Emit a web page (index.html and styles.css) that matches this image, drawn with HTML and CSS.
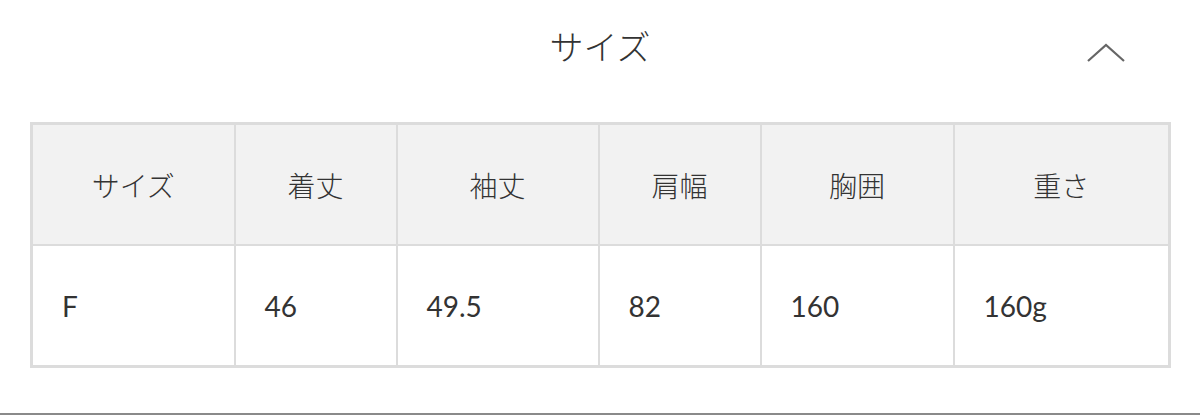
FILE: index.html
```html
<!DOCTYPE html>
<html lang="ja">
<head>
<meta charset="utf-8">
<link rel="stylesheet" href="styles.css">
</head>
<body>
<section class="size">
  <div class="size-head">
    <span class="spacer"></span>
    <h2 class="size-title">サイズ</h2>
    <button class="toggle" aria-label="閉じる">
      <svg width="40" height="22" viewBox="0 0 40 22"><path d="M2 19 L20 3 L38 19" fill="none" stroke="#666" stroke-width="2.2"/></svg>
    </button>
  </div>
  <div class="table-wrap">
    <table class="size-table">
      <colgroup>
        <col class="c1"><col class="c2"><col class="c3"><col class="c4"><col class="c5"><col class="c6">
      </colgroup>
      <thead>
        <tr><th>サイズ</th><th>着丈</th><th>袖丈</th><th>肩幅</th><th>胸囲</th><th>重さ</th></tr>
      </thead>
      <tbody>
        <tr><td>F</td><td>46</td><td>49.5</td><td>82</td><td>160</td><td>160g</td></tr>
      </tbody>
    </table>
  </div>
</section>
<div class="divider"></div>
</body>
</html>
```

FILE: styles.css
```css
html, body {
  margin: 0;
  padding: 0;
  background: #fff;
}
body {
  font-family: "Lato", "Noto Sans CJK JP", sans-serif;
  color: #333;
  width: 1200px;
  height: 415px;
  overflow: hidden;
  position: relative;
}
.size-head {
  height: 94px;
  display: grid;
  grid-template-columns: 1fr auto 1fr;
  align-items: center;
}
.size-title {
  margin: 0;
  font-weight: 300;
  font-size: 34px;
  line-height: 1;
  color: #333;
}
.toggle {
  justify-self: end;
  margin-right: 74px;
  margin-top: 12px;
  background: none;
  border: 0;
  padding: 0;
  width: 40px;
  height: 22px;
  display: flex;
}
.table-wrap {
  padding: 28px 31px 0 30px;
}
.size-table {
  width: 1138px;
  border-collapse: collapse;
  table-layout: fixed;
  border: 3px solid #dcdcdc;
}
.c1 { width: 203px; }
.c2 { width: 162px; }
.c3 { width: 202px; }
.c4 { width: 162px; }
.c5 { width: 193px; }
.c6 { width: 216px; }
.size-table th,
.size-table td {
  border: 2px solid #dcdcdc;
  font-size: 28px;
  font-weight: 400;
  color: #333;
  height: 119px;
  padding: 0;
}
.size-table th {
  background: #f2f2f2;
  text-align: center;
  font-weight: 300;
}
.size-table td {
  background: #fff;
  text-align: left;
  padding-left: 29px;
}
.divider {
  position: absolute;
  left: 0;
  right: 0;
  top: 413px;
  height: 2px;
  background: #8a8a8a;
}
```
